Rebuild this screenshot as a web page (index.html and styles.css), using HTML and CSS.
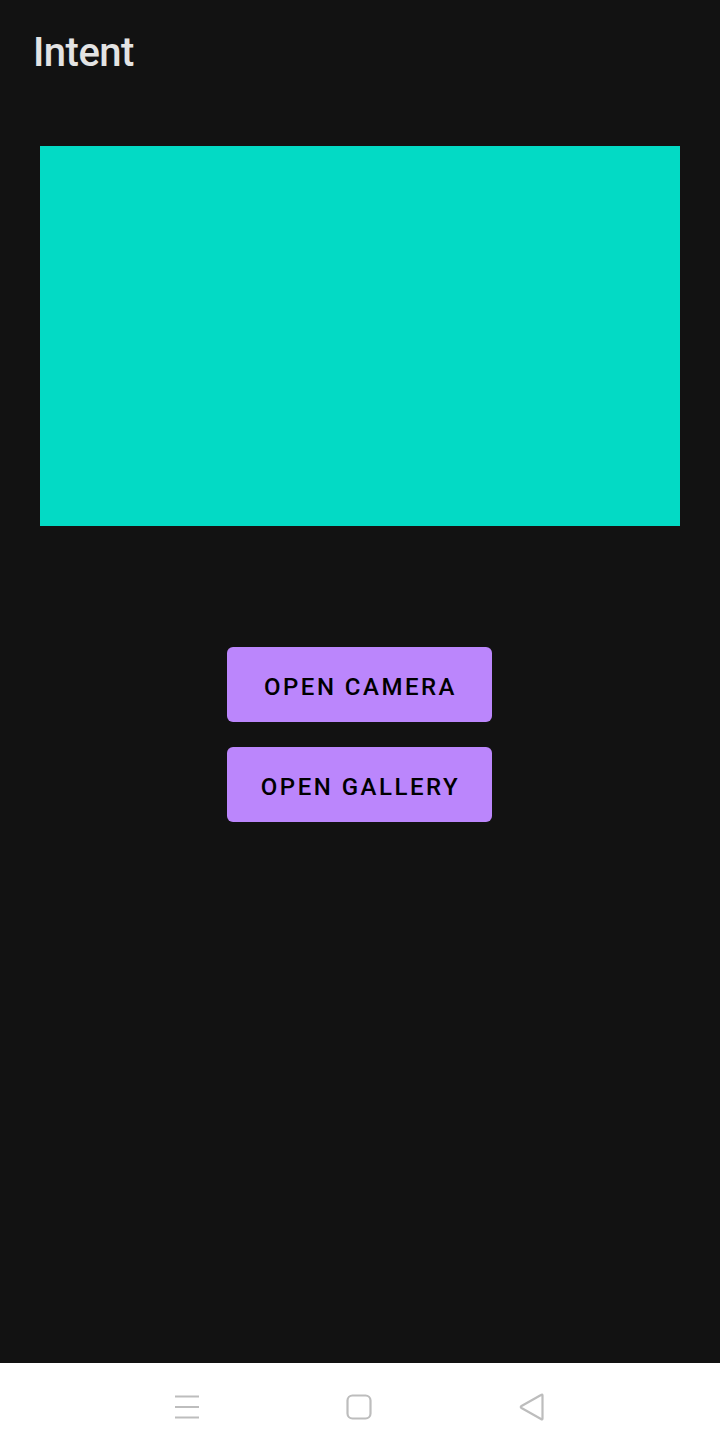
FILE: index.html
```html
<!DOCTYPE html>
<html>
<head>
<meta charset="utf-8">
<link rel="stylesheet" href="styles.css">
</head>
<body>
<div class="screen">
  <main class="app">
    <h1 class="title">Intent</h1>
    <div class="preview"></div>
    <div class="actions">
      <button class="btn">OPEN CAMERA</button>
      <button class="btn">OPEN GALLERY</button>
    </div>
  </main>
  <nav class="navbar">
    <svg class="nav-icon" width="26" height="26" viewBox="0 0 26 26"><path d="M1 2.5H25M1 13H25M1 23.5H25" stroke="#bdbdbd" stroke-width="2" fill="none"/></svg>
    <svg class="nav-icon" width="26" height="26" viewBox="0 0 26 26"><rect x="1.5" y="1.5" width="23" height="23" rx="5" stroke="#bdbdbd" stroke-width="2.2" fill="none"/></svg>
    <svg class="nav-icon" width="28" height="28" viewBox="0 0 28 28"><path d="M24.5 2.5 V25.5 Q24.5 27 23 26 L3.5 15 Q2 14 3.5 13 L23 2 Q24.5 1 24.5 2.5Z" stroke="#bdbdbd" stroke-width="2.2" fill="none" stroke-linejoin="round"/></svg>
  </nav>
</div>
</body>
</html>
```
FILE: styles.css
```css
* { box-sizing: border-box; }
html, body { margin: 0; padding: 0; }
body {
  width: 720px;
  height: 1450px;
  background: #121212;
  font-family: Roboto, "Noto Sans", sans-serif;
  overflow: hidden;
}
.screen {
  display: flex;
  flex-direction: column;
  height: 1450px;
}
.app {
  flex: 1;
  display: flex;
  flex-direction: column;
  background: #121212;
}
.title {
  margin: 0;
  padding: 30px 0 0 33px;
  height: 146px;
  font-size: 40px;
  font-weight: 500;
  color: #e3e3e3;
  line-height: 46px;
  letter-spacing: -0.5px;
}
.preview {
  margin: 0 40px;
  height: 380px;
  background: #03dac5;
}
.actions {
  margin-top: 121px;
  display: flex;
  flex-direction: column;
  align-items: center;
  gap: 25px;
}
.btn {
  width: 265px;
  height: 75px;
  border: none;
  border-radius: 6px;
  background: #bb86fc;
  color: #000;
  font-family: Roboto, "Noto Sans", sans-serif;
  font-weight: 500;
  font-size: 24px;
  letter-spacing: 2.5px;
  padding: 4px 0 0 2px;
  margin-left: -1px;
}
.navbar {
  height: 87px;
  background: #ffffff;
  display: flex;
  align-items: center;
  justify-content: center;
  gap: 146px;
}
.nav-icon { display: block; }
```
